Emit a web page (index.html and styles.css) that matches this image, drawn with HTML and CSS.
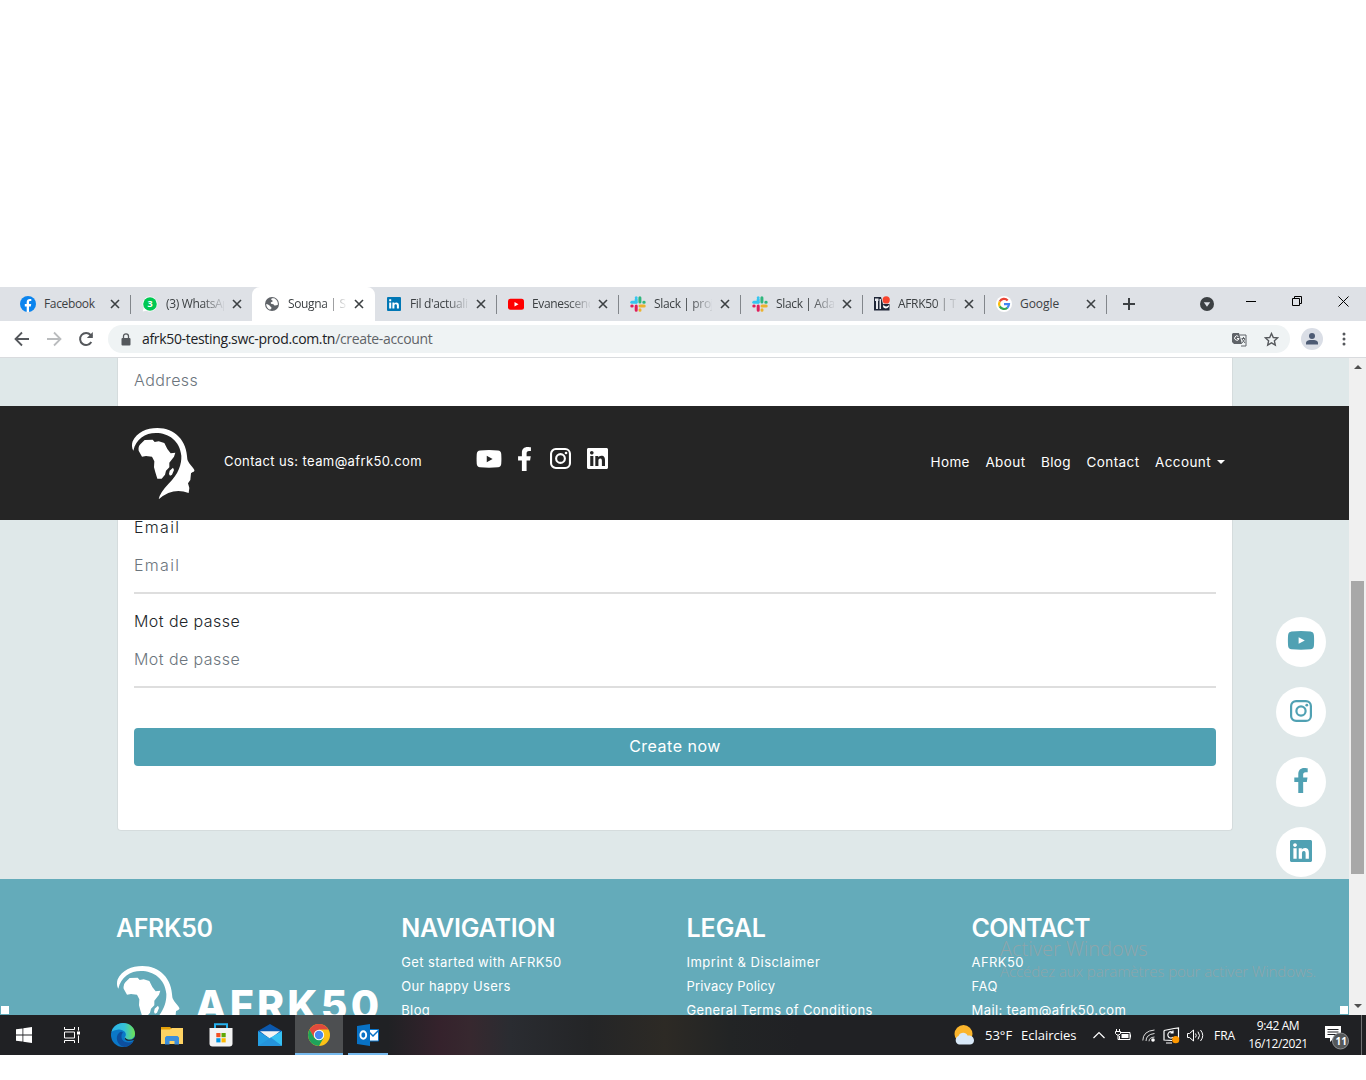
FILE: index.html
```html
<!DOCTYPE html>
<html lang="fr">
<head>
<meta charset="utf-8">
<title>Sougna | Create account</title>
<link rel="stylesheet" href="styles.css">
</head>
<body>
<svg class="defs" width="0" height="0">
  <symbol id="close" viewBox="0 0 10 10"><path d="M1 1l8 8M9 1L1 9" stroke="#3c4043" stroke-width="1.600"/></symbol>
  <symbol id="youtube" viewBox="0 0 28 20"><path fill="currentColor" fill-rule="evenodd" d="M4 .6Q14-.4 24 .6 27.300 1 27.600 4.500 28 10 27.600 15.500 27.300 18.800 24 19.300 14 20.300 4 19.300.700 18.800.400 15.500 0 10 .400 4.500.700 1 4 .6ZM11.500 6.500v7l6.500-3.500Z"/></symbol>
  <symbol id="facebook" viewBox="0 0 320 512"><path fill="currentColor" d="M279.140 288l14.220-92.660h-88.910v-60.130c0-25.350 12.420-50.060 52.240-50.060h40.420V6.260S260.430 0 225.360 0c-73.220 0-121.080 44.380-121.080 124.720v70.620H22.890V288h81.390v224h100.170V288z"/></symbol>
  <symbol id="instagram" viewBox="0 0 22 22"><rect x="1.100" y="1.100" width="19.800" height="19.800" rx="5" fill="none" stroke="currentColor" stroke-width="2.200"/><circle cx="11" cy="11" r="4.600" fill="none" stroke="currentColor" stroke-width="2.200"/><circle cx="16.800" cy="5.200" r="1.400" fill="currentColor"/></symbol>
  <symbol id="linkedin" viewBox="0 32 448 448"><path fill="currentColor" d="M416 32H31.900C14.300 32 0 46.500 0 64.300v383.400C0 465.500 14.300 480 31.900 480H416c17.600 0 32-14.500 32-32.300V64.300c0-17.800-14.400-32.300-32-32.300zM135.400 416H69V202.200h66.500V416zm-33.200-243c-21.300 0-38.500-17.300-38.500-38.500S80.900 96 102.200 96c21.200 0 38.500 17.300 38.500 38.500 0 21.300-17.200 38.500-38.500 38.500zm282.100 243h-66.400V312c0-24.800-.5-56.700-34.500-56.700-34.600 0-39.900 27-39.900 54.900V416h-66.400V202.200h63.700v29.200h.9c8.900-16.800 30.600-34.500 62.900-34.500 67.200 0 79.700 44.300 79.700 101.900V416z"/></symbol>
  <symbol id="head" viewBox="60 76 198 225"><path fill="#fff" d="M70 150C65 143 65 130 68 122 80 95 110 82 142 82 195 82 231 120 232 176 235 188 247 197 253 208 255 214 244 215 243 218L241 238 234 248 238 262 236 277Q188 259 146 296 149 277 175 250C206 220 215 190 214 165 210 120 175 97 138 97 105 97 78 115 70 150ZM86 150Q84 138 91 131L104 118 128 117 134 124 146 122 163 127 172 145 182 158 196 156 192 168 178 186 178 200 168 210 165 222 155 234 142 234 136 215 132 200 133 182 126 168 108 166 96 168ZM189 201L192 208 186 222 180 225 177 220 179 210Z"/></symbol>
  <symbol id="slack" viewBox="0 0 16 16"><g stroke-width="3" stroke-linecap="round"><path d="M1.800 6.200H6" stroke="#36c5f0"/><path d="M6.200 1.800V1.800M6.200 3v3" stroke="#36c5f0"/><path d="M9.900 1.800V6M14.200 6.200h-.4" stroke="#2eb67d"/><path d="M10 9.900h4.200M10 14.200v-.4" stroke="#ecb22e"/><path d="M6.200 10v4.200M1.800 9.900h.4" stroke="#e01e5a"/></g></symbol>
</svg>

<main class="screen">
  <header class="tabs">
    <div class="tab"><svg class="fav" viewBox="0 0 16 16"><circle cx="8" cy="8" r="8" fill="#0b84ee"/><path d="M6.700 16v-5.500H4.800V8h1.900V6.300c0-2.300 1.200-3.300 3.200-3.300l1.400.1v2h-1c-1 0-1.300.5-1.300 1.200V8h2.200l-.4 2.500H9V16Z" fill="#fff"/></svg><span class="tab-title wide">Facebook</span><svg class="x"><use href="#close"/></svg></div>
    <div class="tab"><svg class="fav" viewBox="0 0 16 16"><path d="M8 .5a7.500 7.500 0 1 1-3.500 14.200L.7 15.600l1-3.700A7.500 7.500 0 0 1 8 .5Z" fill="#fff"/><circle cx="8" cy="8" r="6.800" fill="#00c853"/><text x="5.400" y="11.300" class="badge3">3</text></svg><span class="tab-title">(3) WhatsApp</span><svg class="x"><use href="#close"/></svg></div>
    <div class="tab active"><svg class="fav" viewBox="0 0 16 16"><circle cx="8" cy="8" r="7" fill="#5f6368"/><path d="M8 2.200c-1.500.8-1 1.800.5 2.300.5 1-.5 1.700-1.500 1.700C6 7.500 8 8 9.500 8.300c.5 1.700 2.500 1.400 4.400.5.300-3-1.500-5.800-4-6.500ZM2.200 8C4 8 5 9 6 10c.3 1 1.800 1 1.500 2.200-.4.800-1.100.6-1.300 1.600C3.700 13 2.200 10.600 2.200 8Z" fill="#fff"/></svg><span class="tab-title">Sougna | Sou</span><svg class="x"><use href="#close"/></svg></div>
    <div class="tab"><svg class="fav" viewBox="0 0 16 16"><rect x="1" y="1" width="14" height="14" rx="1" fill="#0077b5"/><path d="M3.200 6.500h2v6h-2ZM3.200 3.300h2v2h-2ZM6.400 6.500h2v.9c1-1.600 4.500-1.400 4.500 1.600v3.500h-2V9.300c0-1.600-2.500-1.500-2.500 0v3.200h-2Z" fill="#fff"/></svg><span class="tab-title">Fil d'actualité</span><svg class="x"><use href="#close"/></svg></div>
    <div class="tab"><svg class="fav" viewBox="0 0 16 16"><rect y="2.700" width="16" height="11" rx="2.500" fill="#f00"/><path d="M6.500 6v4.500l4-2.250Z" fill="#fff"/></svg><span class="tab-title">Evanescence</span><svg class="x"><use href="#close"/></svg></div>
    <div class="tab"><svg class="fav"><use href="#slack"/></svg><span class="tab-title">Slack | projet</span><svg class="x"><use href="#close"/></svg></div>
    <div class="tab"><svg class="fav"><use href="#slack"/></svg><span class="tab-title">Slack | Adam</span><svg class="x"><use href="#close"/></svg></div>
    <div class="tab"><svg class="fav" viewBox="0 0 16 16"><path d="M0 1h7l2 7h6.500v6.500H0Z" fill="#202738"/><path d="M1 2.500h3.500V5H4v8H2V5H1ZM5.500 3H7v10H5.500Z" fill="#e7e9ee"/><path d="M9.500 8.500c1 2.500 4 2.500 5.500.5v1.500c-1.500 2.500-4.500 2.500-6 .5Z" fill="#fff"/><circle cx="12.200" cy="3.900" r="3.600" fill="#f9442e"/></svg><span class="tab-title">AFRK50 | Trou</span><svg class="x"><use href="#close"/></svg></div>
    <div class="tab"><svg class="fav" viewBox="0 0 16 16"><circle cx="8" cy="8" r="8" fill="#fff"/><g fill="none" stroke-width="2.200"><path d="M3.700 5.600a5 5 0 0 1 8-1.200" stroke="#ea4335"/><path d="M3.700 10.400a5 5 0 0 1 0-4.800" stroke="#fbbc05"/><path d="M11.400 11.700a5 5 0 0 1-7.700-1.300" stroke="#34a853"/><path d="M8 8.100h5a5 5 0 0 1-1.700 3.700" stroke="#4285f4"/></g></svg><span class="tab-title wide google">Google</span><svg class="x"><use href="#close"/></svg></div>
    <svg class="plus" viewBox="0 0 12 12"><path d="M6 0v12M0 6h12" stroke="#3c4043" stroke-width="2"/></svg>
    <div class="winctl">
      <svg width="14" height="14" viewBox="0 0 14 14"><circle cx="7" cy="7" r="7" fill="#3c4043"/><path d="M3.800 5.200h6.400L7 9.800Z" fill="#dee1e6"/></svg>
      <svg width="10" height="10" viewBox="0 0 10 10" class="up"><path d="M0 4.500h10" stroke="#000"/></svg>
      <svg width="11" height="11" viewBox="0 0 11 11" class="up"><path d="M.5 2.500h7v7h-7ZM2.500 2.500v-2h7v7h-2" fill="none" stroke="#000"/></svg>
      <svg width="11" height="11" viewBox="0 0 11 11" class="up"><path d="M.5.5l10 10M10.500.5l-10 10" stroke="#000"/></svg>
    </div>
  </header>

  <div class="toolbar">
    <svg class="nav-ic" viewBox="0 0 16 16"><path d="M15 8H2M8 1.500L1.500 8 8 14.500" fill="none" stroke="#55585c" stroke-width="1.800"/></svg>
    <svg class="nav-ic" viewBox="0 0 16 16"><path d="M1 8h13M8 1.500L14.500 8 8 14.500" fill="none" stroke="#babcbe" stroke-width="1.800"/></svg>
    <svg class="nav-ic" viewBox="0 0 16 16"><path d="M13.300 11A6 6 0 1 1 12.600 4L14 5.500" fill="none" stroke="#55585c" stroke-width="2"/><path d="M14.800 1v6h-6Z" fill="#55585c"/></svg>
    <div class="omnibox">
      <svg width="10" height="13" viewBox="0 0 10 13"><rect x=".5" y="5" width="9" height="7.500" rx="1" fill="#55585c"/><path d="M2.500 5.500V3.300a2.500 2.500 0 0 1 5 0v2.200" fill="none" stroke="#55585c" stroke-width="1.300"/></svg>
      <span class="url">afrk50-testing.swc-prod.com.tn<span class="path">/create-account</span></span>
      <svg width="15" height="15" viewBox="0 0 15 15"><path d="M1 1h6l3 11H2L0 10V2Z" fill="#5f6368"/><path d="M7.500 3H14v11H9M9.500 6.500H13M11.500 5v1.500M10 7l3 4M13 7l-3 4" fill="none" stroke="#5f6368"/><path d="M6.300 4.400A2.200 2.200 0 1 0 7 6.500H5" fill="none" stroke="#fff"/></svg>
      <svg width="15" height="15" viewBox="0 0 15 15"><path d="M7.500 1.500l1.800 4 4.300.4-3.200 2.900.9 4.300-3.800-2.200-3.800 2.200.9-4.300L1.400 5.900l4.300-.4Z" fill="none" stroke="#55585c" stroke-width="1.400"/></svg>
    </div>
    <svg class="avatar" viewBox="0 0 22 22"><circle cx="11" cy="11" r="11" fill="#dadee6"/><circle cx="11" cy="8" r="3" fill="#4d5b74"/><path d="M5 16.500v-1.500C5 12.500 8 12 11 12s6 .5 6 3v1.500Z" fill="#4d5b74"/></svg>
    <svg width="4" height="14" viewBox="0 0 4 14"><g fill="#55585c"><circle cx="2" cy="2" r="1.500"/><circle cx="2" cy="7" r="1.500"/><circle cx="2" cy="12" r="1.500"/></g></svg>
  </div>

  <div class="viewport">
    <div class="page">
      <section class="card">
        <div class="field first"><span class="ph">Address</span></div>
        <div class="field"><span class="label email">Email</span><span class="ph email">Email</span></div>
        <div class="field"><span class="label">Mot de passe</span><span class="ph">Mot de passe</span></div>
        <div class="btn">Create now</div>
      </section>
      <footer class="footer">
        <div class="col"><h4 class="h-afrk">AFRK50</h4><div class="brand"><svg class="head"><use href="#head"/></svg><span class="brand-name">AFRK50</span></div></div>
        <div class="col"><h4 class="h-nav">NAVIGATION</h4><span>Get started with AFRK50</span><span>Our happy Users</span><span>Blog</span></div>
        <div class="col"><h4 class="h-legal">LEGAL</h4><span class="imprint">Imprint &amp; Disclaimer</span><span class="privacy">Privacy Policy</span><span>General Terms of Conditions</span></div>
        <div class="col"><h4 class="h-contact">CONTACT</h4><span>AFRK50</span><span>FAQ</span><span>Mail: team@afrk50.com</span></div>
      </footer>
      <nav class="navbar">
        <svg class="head"><use href="#head"/></svg>
        <span class="mail">Contact us: team@afrk50.com</span>
        <div class="nav-social"><svg class="yt"><use href="#youtube"/></svg><svg class="fb"><use href="#facebook"/></svg><svg class="ig"><use href="#instagram"/></svg><svg class="li"><use href="#linkedin"/></svg></div>
        <div class="menu"><span>Home</span><span>About</span><span>Blog</span><span>Contact</span><span>Account<i class="caret"></i></span></div>
      </nav>
      <aside class="side">
        <div><svg width="28" height="19"><use href="#youtube"/></svg></div>
        <div><svg width="22" height="22"><use href="#instagram"/></svg></div>
        <div><svg width="16" height="25"><use href="#facebook"/></svg></div>
        <div><svg width="22" height="22"><use href="#linkedin"/></svg></div>
      </aside>
      <div class="watermark"><span class="w1">Activer Windows</span><span class="w2">Accédez aux paramètres pour activer Windows.</span></div>
      <i class="handle left"></i><i class="handle right"></i>
    </div>
    <div class="scroll"><i class="arrow up-arrow"></i><i class="thumb"></i><i class="arrow down-arrow"></i></div>
  </div>

  <div class="taskbar">
    <div class="app"><svg width="16" height="16" viewBox="0 0 16 16"><path d="M0 2.300l6.500-.9v6.100H0ZM7.300 1.300L16 0v7.500H7.300ZM0 8.400h6.500v6.200L0 13.700ZM7.300 8.400H16V16l-8.700-1.300Z" fill="#fff"/></svg></div>
    <div class="app tv"><svg width="16" height="16" viewBox="0 0 16 16"><path d="M.5 0v2.500h10V0M.5 16v-2.500h10V16M.5 5h10v6H.5ZM14.500 0v3.500M14.500 8.500V16" fill="none" stroke="#fff"/><rect x="13" y="4.500" width="3" height="3" fill="#fff"/></svg></div>
    <div class="app"><svg width="24" height="24" viewBox="0 0 24 24"><defs><linearGradient id="eg"><stop offset="0" stop-color="#2bb3e6"/><stop offset=".55" stop-color="#35c1d9"/><stop offset="1" stop-color="#6fe34f"/></linearGradient></defs><circle cx="12" cy="12" r="12" fill="#0b78c8"/><path d="M.5 9C2 3.500 6.500 0 12 0c7 0 12 5 12 10.500 0 4-3 6-6.500 6-3 0-4.500-1-3.500-2.500 3-4-2-8-6.500-7.500C4 6.800 1.500 8 .5 9Z" fill="url(#eg)"/><path d="M8.500 9.500C3 14 6.500 23 13.500 23.900 18 23.500 21 21 22.300 18.500 16 21 10 18.500 10.500 13c0-2 1-3 1.500-3.500-1-1-2.500-.8-3.500 0Z" fill="#0d4f9e"/><path d="M14 14.500c-1 3 4 4.300 9 2.500v2l3 3V12l-4 4c-3 1.500-6 1-8-1.500Z" fill="#202124"/></svg></div>
    <div class="app"><svg width="22" height="19" viewBox="0 0 22 19"><path d="M0 1h9l2 2v3H0Z" fill="#e3a008"/><path d="M0 3.500h9L11 2h11v16H0Z" fill="#ffd363"/><path d="M4 18.500v-7l1.500-1.500h11L18 11.500v7h-4.500V15h-5v3.500Z" fill="#3c8edb"/></svg></div>
    <div class="app"><svg width="24" height="24" viewBox="0 0 24 24"><path d="M6 6V1.200h12V6" fill="none" stroke="#25b2ef" stroke-width="2"/><path d="M.5 5h23v15.500q0 3-3 3h-17q-3 0-3-3Z" fill="#f3f3f3"/><path d="M7.300 10h4.200v4.200H7.300Z" fill="#f25022"/><path d="M12.500 10h4.200v4.200h-4.200Z" fill="#60a805"/><path d="M7.300 15.200h4.200v4.200H7.300Z" fill="#0097e5"/><path d="M12.500 15.200h4.200v4.200h-4.200Z" fill="#ffb900"/></svg></div>
    <div class="app"><svg width="24" height="22" viewBox="0 0 24 22"><path d="M0 7L12 0l12 7v5H0Z" fill="#0b58ad"/><path d="M2 7.200h20L12 15Z" fill="#f4f4f4"/><path d="M0 7l24 15H0Z" fill="#259fe3"/><path d="M24 7v15L11 14.500Z" fill="#36c1f3"/><path d="M0 22l13-8.500L24 22Z" fill="#2594dc"/></svg></div>
    <div class="app on"><svg width="22" height="22" viewBox="0 0 22 22"><circle cx="11" cy="11" r="11" fill="#fbc116"/><path d="M1.500 5.500A11 11 0 0 1 20.500 5.500H11L6.200 14Z" fill="#e04a3d"/><path d="M1.500 5.500A11 11 0 0 0 11 22l4.500-8H6.300Z" fill="#1ea35b"/><circle cx="11" cy="11" r="5.200" fill="#fff"/><circle cx="11" cy="11" r="4.200" fill="#4688f1"/></svg></div>
    <div class="app open"><svg width="22" height="22" viewBox="0 0 22 22"><path d="M12 5.500h9.500v11.500H12Z" fill="#fff" stroke="#0872c6"/><path d="M12 8l4 4 5.500-5.500" fill="none" stroke="#0872c6" stroke-width="1.500"/><path d="M0 2l13-2v22L0 20Z" fill="#0872c6"/><ellipse cx="6.300" cy="11" rx="2.900" ry="3.700" fill="none" stroke="#fff" stroke-width="1.900"/></svg></div>
    <div class="tray">
      <svg width="22" height="20" viewBox="0 0 22 20"><circle cx="9.500" cy="9" r="9" fill="#fbb52c"/><path d="M5 19.500a4.500 4.500 0 0 1-.5-8.500C6 7 12 6.500 13.500 10.500 17 10 20 12 20 15.500c0 2.500-2 4-4 4Z" fill="#d9e9f8"/></svg>
      <span class="temp">53°F</span><span class="sky">Eclaircies</span>
      <svg width="12" height="8" viewBox="0 0 12 8"><path d="M.5 7L6 1.500 11.500 7" fill="none" stroke="#fff" stroke-width="1.200"/></svg>
      <svg width="17" height="13" viewBox="0 0 17 13"><path d="M5 3.500h10v7H4.500V7M15.500 5.500v3M1.500 0v2M4.500 0v2M.5 2.500h5v2l-1.500 1.500H2L.5 4.500ZM3 6v4.500h2" fill="none" stroke="#fff"/><path d="M6.500 5h7v4h-7Z" fill="#fff"/></svg>
      <svg width="14" height="13" viewBox="0 0 14 13"><g fill="none" stroke="#ddd"><path d="M.8 11.500Q1 2 12.500 1"/><path d="M4 12Q4 5.500 12.500 4.500"/><path d="M7 12.300Q7 8.500 12.500 8"/></g><circle cx="11" cy="11" r="1.800" fill="#fff"/></svg>
      <svg width="17" height="17" viewBox="0 0 17 17"><path d="M1 3.500l10-2 4.500-.5v10M1 3.500v9.500l8 .5M3 16h6M9.500 5.500C7 3.500 4 6 5 9M10 3.500v2.500H7.500M10 10c-1 1.500-4 1.500-5-1" fill="none" stroke="#fff" stroke-width="1.200"/><circle cx="12.700" cy="12.700" r="3.600" fill="#ff9800"/></svg>
      <svg width="17" height="13" viewBox="0 0 17 13"><path d="M.5 4.500h2L6.500 1v11l-4-3.500h-2ZM8.500 4.500q1.500 2 0 4M11 2.700q3 3.800 0 7.600M13.500 1q4.500 5.500 0 11" fill="none" stroke="#fff"/></svg>
      <span class="lang">FRA</span>
      <div class="clock"><span>9:42 AM</span><span>16/12/2021</span></div>
      <svg class="notes" width="26" height="26" viewBox="0 0 26 26"><path d="M0 1h16v12H9l-4 4v-4H0Z" fill="#fff"/><path d="M2.500 4.500h11M2.500 7h11M2.500 9.500h11" stroke="#202124"/><circle cx="15.500" cy="16" r="8" fill="#55585a" stroke="#8c8e90"/><text x="10.500" y="20" class="count">11</text></svg>
    </div>
  </div>
</main>
</body>
</html>
```
FILE: styles.css
```css
* { box-sizing: border-box; }
body { margin: 0; background: #fff; height: 1080px; overflow: hidden; font-family: "Open Sans", "Noto Sans", sans-serif; }
svg { display: block; flex: none; }
.defs { position: absolute; }
.screen { width: 1366px; padding-top: 287px; display: flex; flex-direction: column; }

.tabs { height: 34px; background: #dee1e6; display: flex; align-items: center; padding-left: 8px; }
.tab { width: 122px; height: 34px; flex: none; display: flex; align-items: center; padding-left: 12px; position: relative; }
.tab::after { content: ""; position: absolute; right: -1px; top: 8px; width: 1px; height: 19px; background: #82868b; }
.tab:nth-child(2)::after, .tab.active::after { display: none; }
.tab.active { background: #fff; border-radius: 8px 8px 0 0; width: 123px; margin-right: -1px; }
.fav { width: 16px; height: 16px; }
.tab-title { margin-left: 8px; width: 58px; height: 20px; line-height: 20px; overflow: hidden; white-space: nowrap; font-size: 12px; letter-spacing: -.35px; color: #3c4043; -webkit-mask-image: linear-gradient(90deg, #000 36px, transparent 60px); mask-image: linear-gradient(90deg, #000 36px, transparent 60px); }
.tab-title.wide { -webkit-mask-image: none; mask-image: none; }
.tab-title.google { letter-spacing: -.05px; }
.x { width: 10px; height: 10px; margin-left: 8px; }
.badge3 { font: 700 9px "Open Sans", sans-serif; fill: #fff; }
.plus { width: 12px; height: 12px; margin-left: 17px; }
.winctl { margin-left: auto; padding-right: 17px; height: 34px; display: grid; grid-template-columns: 46px 46px 46px 11px; align-items: center; }
.up { margin-top: -5px; }

.toolbar { height: 37px; border-bottom: 1px solid #d9dbde; background: #fff; display: flex; align-items: center; padding-left: 14px; }
.nav-ic { width: 16px; height: 16px; margin-right: 16px; }
.omnibox { width: 1182px; height: 28px; margin-left: -2px; border-radius: 14px; background: #eff3f4; display: flex; align-items: center; padding: 0 11px 0 13px; }
.url { flex: 1; margin: -1px 0 0 11px; font-size: 14px; letter-spacing: -.33px; color: #202124; }
.url .path { color: #5f6368; }
.omnibox svg + svg { margin-left: 17px; }
.avatar { width: 22px; height: 22px; margin: 0 19px 0 11px; }

.viewport { height: 657px; display: flex; overflow: hidden; }
.page { width: 1349px; position: relative; overflow: hidden; background: #dfe8e9; font-family: Inter, "Open Sans", sans-serif; display: flex; flex-direction: column; }
.card { width: 1116px; height: 473px; flex: none; margin-left: 117px; background: #fff; border: 1px solid #d5dcdd; border-top: 0; border-radius: 0 0 4px 4px; padding: 0 16px; font-size: 16px; font-weight: 300; }
.field { height: 79px; margin-bottom: 15px; border-bottom: 2px solid #dedede; display: flex; flex-direction: column; line-height: 24px; letter-spacing: .43px; }
.field.first { height: 51px; margin-bottom: 106px; padding-top: 10px; }
.email { letter-spacing: 1.300px; }
.label { color: #212529; }
.ph { color: #6c757d; }
.label + .ph { margin-top: 14px; }
.btn { height: 38px; margin-top: 40px; border-radius: 4px; background: #50a1b3; color: #fff; font-weight: 400; text-align: center; line-height: 37px; letter-spacing: .5px; }

.footer { height: 140px; flex: none; margin-top: 48px; background: #64abba; padding: 37px 0 0 116px; display: grid; grid-template-columns: repeat(4, 285.2px); color: #fff; }
.col { display: flex; flex-direction: column; font-size: 13px; line-height: 24px; letter-spacing: .4px; white-space: nowrap; }
.col h4 { margin: 0 0 10px; font-size: 25px; line-height: 24px; font-weight: 600; }
.col .h-afrk { letter-spacing: -.4px; }
.col .h-nav { letter-spacing: -.2px; }
.col .h-legal { letter-spacing: 0; }
.col .h-contact { letter-spacing: -.7px; }
.imprint { letter-spacing: .55px; }
.privacy { letter-spacing: .2px; }
.brand { display: flex; margin: 14px 0 0 -1px; }
.head { width: 66px; height: 75px; }
.brand-name { margin: 17px 0 0 14px; font-size: 41px; line-height: 48px; font-weight: 800; letter-spacing: 3.200px; }

.navbar { position: absolute; left: 0; top: 48px; width: 100%; height: 114px; background: #252525; color: #fff; display: flex; align-items: center; padding: 0 124px 0 130px; font-size: 13px; white-space: nowrap; }
.mail { margin: -5px 0 0 28px; width: 252px; letter-spacing: .39px; }
.nav-social { display: grid; grid-template-columns: 41px 33px 37px 22px; align-items: center; margin-top: -9px; }
.yt { width: 26px; height: 18px; }
.fb { width: 15px; height: 24px; }
.ig, .li { width: 21px; height: 21px; }
.menu { margin: -2px 0 0 auto; display: flex; gap: 15.500px; font-size: 13.500px; letter-spacing: .4px; }
.caret { display: inline-block; border: 4px solid transparent; border-top-color: #fff; border-bottom: 0; margin-left: 6px; vertical-align: 3px; }

.side { position: absolute; left: 1276px; top: 259px; display: flex; flex-direction: column; gap: 20px; color: #50a1b3; }
.side div { width: 50px; height: 50px; border-radius: 50%; background: #fff; display: flex; align-items: center; justify-content: center; padding-bottom: 3px; }
.watermark { position: absolute; left: 1000px; top: 579px; display: flex; flex-direction: column; white-space: nowrap; color: #8fa5aa; font-family: "Open Sans", sans-serif; font-weight: 300; }
.w1 { font-size: 20px; line-height: 24px; }
.w2 { font-size: 15px; line-height: 22px; letter-spacing: -.07px; margin-top: -1px; }
.handle { position: absolute; top: 648px; width: 8px; height: 8px; background: #fff; }
.left { left: 1px; }
.right { left: 1340px; }
.scroll { width: 17px; background: #f0f0f0; display: flex; flex-direction: column; align-items: center; padding: 7px 0; }
.arrow { border: 4px solid transparent; }
.up-arrow { border-top: 0; border-bottom-color: #505050; }
.down-arrow { border-bottom: 0; border-top-color: #505050; margin-top: auto; }
.thumb { width: 13px; height: 293px; margin-top: 212px; background: #a8a8a8; }

.taskbar { height: 40px; display: flex; background: linear-gradient(90deg, #202124 388px, #35222c 440px, #37282f 470px, #2a2c31 510px, #242527 590px, #2d2a25 665px, #222425 730px, #202124 800px); color: #fff; }
.app { width: 48px; margin-right: 1px; height: 40px; flex: none; display: flex; align-items: center; justify-content: center; }
.app:first-child { margin-right: 0; }
.tv { margin-right: 3px; }
.on { background: #4d4f51; border-bottom: 2px solid #76b9ed; padding-top: 2px; }
.open { background: linear-gradient(#76b9ed, #76b9ed) center bottom / 40px 2px no-repeat; }
.tray { margin-left: auto; width: 408px; display: grid; grid-template-columns: 31px 36px 72px 22px 27px 21px 24px 27px 31px 80px 1fr; align-items: center; font-size: 13px; white-space: nowrap; border-right: 1px solid #6f7072; margin-right: 4px; }
.lang { font-size: 12px; }
.clock { width: 66px; display: flex; flex-direction: column; align-items: center; font-size: 12px; line-height: 18px; letter-spacing: -.4px; }
.notes { margin-top: 5px; }
.count { font: 700 10px "Open Sans", sans-serif; fill: #fff; }
```
